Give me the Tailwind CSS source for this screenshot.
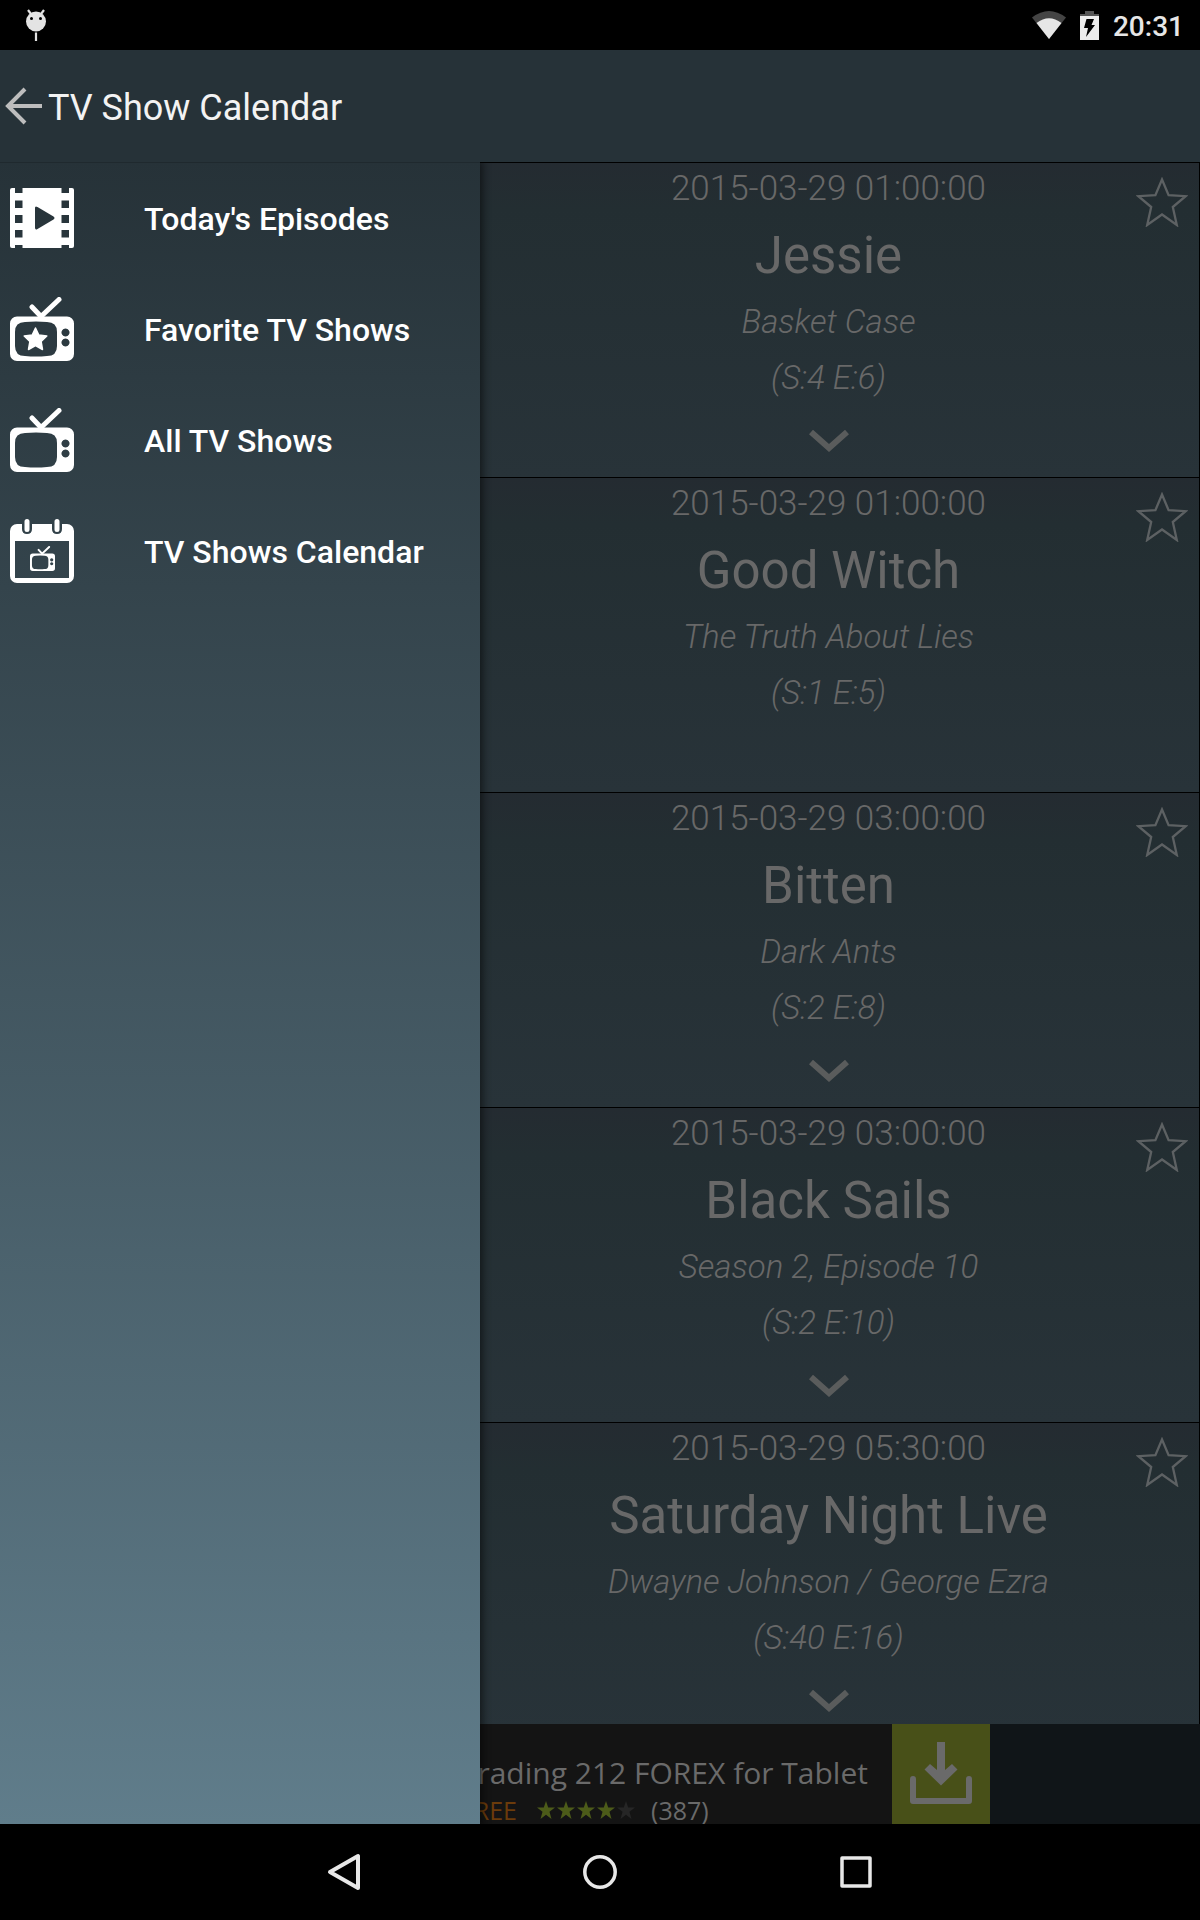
<!DOCTYPE html>
<html lang="en">
<head>
<meta charset="utf-8">
<meta name="viewport" content="width=device-width, initial-scale=1">
<title>TV Show Calendar</title>
<script src="https://cdn.jsdelivr.net/npm/@tailwindcss/browser@4"></script>
</head>
<body class="flex h-screen flex-col overflow-hidden bg-black font-['Roboto',sans-serif] text-white">

<!-- Symbols shared by the rows and the menu -->
<svg class="hidden" aria-hidden="true">
  <symbol id="star-outline" viewBox="0 0 52 50"><path d="M26 2.500l6.600 15.700 17 1-12.800 10.800 4 18L26 37.500 11.200 48l4-18L2.400 19.200l17-1z" fill="none" stroke="currentColor" stroke-width="2.300"/></symbol>
  <symbol id="chevron" viewBox="0 0 40 22"><path d="M2 2l18 16L38 2" fill="none" stroke="currentColor" stroke-width="6"/></symbol>
  <symbol id="star" viewBox="0 0 18 18"><path d="M9 0l2.200 6.500H18l-5.500 4.200L14.500 18 9 13.800 3.500 18l2-7.300L0 6.500h6.800z" fill="currentColor"/></symbol>
  <symbol id="tv" viewBox="0 0 64 64">
    <path d="M22 10l9 9.500L49 2.500" fill="none" stroke="currentColor" stroke-width="5" stroke-linecap="round"/>
    <path fill="currentColor" fill-rule="evenodd" d="M7 19.500h50a7 7 0 0 1 7 7V57a7 7 0 0 1-7 7H7a7 7 0 0 1-7-7V26.500a7 7 0 0 1 7-7zM15 25Q5 25 5 35v14q0 10 10 10 11 1 22 0 10 0 10-10V35q0-10-10-10-11-1-22 0zM55.500 31.500a4 4 0 1 0 .01 0zM55.500 41.500a4 4 0 1 0 .01 0z"/>
  </symbol>
</svg>

<header class="shrink-0">
  <div class="flex h-[50px] items-center bg-black pr-4 pl-[26px]">
    <svg class="h-8 w-5 text-[#e3e3e3]" viewBox="0 0 20 32" aria-hidden="true"><circle cx="10" cy="12.500" r="10" fill="currentColor"/><path d="M2 1l3 4M18 1l-3 4M10 23.500V32" stroke="currentColor" stroke-width="2.200"/><circle cx="5.500" cy="9.500" r="1.500" fill="#000"/><circle cx="14.500" cy="9.500" r="1.500" fill="#000"/></svg>
    <div class="ml-auto flex items-center gap-3.5">
      <svg class="h-7 w-[34px]" viewBox="0 0 34 28" aria-hidden="true"><path d="M0 6.500Q17-6.500 34 6.500L17 28z" fill="#444"/><path d="M4.500 12Q17 2.500 29.500 12L17 28z" fill="#e6e6e6"/></svg>
      <svg class="h-[29px] w-[19px]" viewBox="0 0 19 29" aria-hidden="true"><path d="M5 0h9v3h5v3H0V3h5z" fill="#555"/><path d="M0 5h19v24H0z" fill="#ededed"/><path d="M6.500 8H14l-2.500 6H15L6 26l2-9H4z" fill="#000"/></svg>
      <span class="pt-1 text-[28px] leading-8 font-medium text-[#e6e6e6]">20:31</span>
    </div>
  </div>
  <div class="flex h-28 items-center bg-[#263238] pl-[5px]">
    <button type="button" aria-label="Back" class="text-[#bdbdbd]"><svg class="h-[38px] w-[38px]" viewBox="0 0 38 38"><path d="M37 19H3M20 2L3 19l17 17" fill="none" stroke="currentColor" stroke-width="4"/></svg></button>
    <h1 class="pt-1 pl-[5px] text-[36px] leading-10 text-[#f3f3f3]">TV Show Calendar</h1>
  </div>
</header>

<div class="flex min-h-0 flex-1">
  <nav aria-label="Main menu" class="z-10 w-2/5 shrink-0 bg-linear-to-b from-[#263238] to-[#607d8b] shadow-[inset_0_1px_0_#1f292e,0_0_9px_2px_rgba(0,0,0,0.6)] [clip-path:inset(0_-12px_0_0)]">
    <ul class="text-[32px] leading-10 font-medium">
      <li><a href="#today" class="flex h-[111px] items-center gap-[70px] pl-2.5">
        <svg class="size-16 shrink-0" viewBox="0 0 64 64" aria-hidden="true"><path fill="currentColor" fill-rule="evenodd" d="M2 2h3v5h7.500V2h39v5H59V2h3q2 0 2 2v56q0 2-2 2h-3v-3h-7.500v3h-39v-3H5v3H2q-2 0-2-2V4q0-2 2-2zM5 14.500V22h7.500v-7.500zM5 29v8h7.500v-8zM5 44v7.500h7.500V44zM51.500 14.500V22H59v-7.500zM51.500 29v8H59v-8zM51.500 44v7.500H59V44zM25 22v19.500q0 3 2.500 1.500l16-9.500q2-1.500 0-3l-16-9.500Q25 19.500 25 22z"/></svg>
        <span class="pt-0.5">Today's Episodes</span></a></li>
      <li><a href="#favorites" class="flex h-[111px] items-center gap-[70px] pl-2.5">
        <svg class="size-16 shrink-0" viewBox="0 0 64 64" aria-hidden="true"><use href="#tv"/><path fill="currentColor" stroke="currentColor" stroke-width="1.500" stroke-linejoin="round" d="M25.500 31l3.300 7 8 1-5.700 5.500 1.400 8-7-4-7 4 1.400-8-5.700-5.500 8-1z"/></svg>
        <span class="pt-0.5">Favorite TV Shows</span></a></li>
      <li><a href="#all" class="flex h-[111px] items-center gap-[70px] pl-2.5">
        <svg class="size-16 shrink-0" aria-hidden="true"><use href="#tv"/></svg>
        <span class="pt-0.5">All TV Shows</span></a></li>
      <li><a href="#calendar" class="flex h-[111px] items-center gap-[70px] pl-2.5">
        <svg class="size-16 shrink-0" viewBox="0 0 64 64" aria-hidden="true"><path fill="currentColor" fill-rule="evenodd" d="M7 5h5v5q0 5 5 5t5-5V5h20v5q0 5 5 5t5-5V5h5a7 7 0 0 1 7 7v45a7 7 0 0 1-7 7H7a7 7 0 0 1-7-7V12a7 7 0 0 1 7-7zM5 22v37h54V22z"/><path d="M17 2.500v8M47 2.500v8" stroke="currentColor" stroke-width="5" stroke-linecap="round"/><use href="#tv" x="20" y="27" width="25" height="25"/></svg>
        <span class="pt-0.5">TV Shows Calendar</span></a></li>
    </ul>
  </nav>

  <div class="flex min-w-0 flex-1 flex-col">
    <main class="min-h-0 flex-1 overflow-hidden text-[#686868]" id="episodes"></main>

    <aside aria-label="Advertisement" class="flex h-[100px] shrink-0 overflow-hidden bg-[#101518]">
      <div class="flex w-[412px] shrink-0 flex-col items-end overflow-hidden bg-[#141414] pt-[29px] pr-6 font-['Open_Sans',sans-serif] whitespace-nowrap text-[#6a6a6a]">
        <div>
          <p class="text-[30px] leading-10">Trading 212 FOREX for Tablet</p>
          <div class="flex items-center text-[25px] leading-[34px]">
            <span class="text-[#6b3b0b]">FREE</span>
            <span class="flex gap-0.5 pl-5 text-[#4c5b19]" role="img" aria-label="4 out of 5 stars">
              <svg class="size-[18px]"><use href="#star"/></svg>
              <svg class="size-[18px]"><use href="#star"/></svg>
              <svg class="size-[18px]"><use href="#star"/></svg>
              <svg class="size-[18px]"><use href="#star"/></svg>
              <svg class="size-[18px] text-[#262626]"><use href="#star"/></svg>
            </span>
            <span class="pl-4">(387)</span>
          </div>
        </div>
      </div>
      <button type="button" aria-label="Install" class="flex w-[98px] shrink-0 justify-center bg-[#485018] pt-[18px] text-[#6a6a6a]">
        <svg class="h-[62px] w-[62px]" viewBox="0 0 62 62"><path d="M27 0h8v28l7-6 5.500 5.500L31 43.500 14.500 27.500 20 22l7 6z" fill="currentColor"/><path d="M3 37v22h56V37" fill="none" stroke="currentColor" stroke-width="6" stroke-linejoin="round" stroke-linecap="round"/></svg>
      </button>
    </aside>
  </div>
</div>

<nav aria-label="System" class="flex h-24 shrink-0 items-center justify-center bg-black text-[#e8e8e8]">
  <button type="button" aria-label="Back" class="flex w-64 justify-center"><svg class="h-10 w-10" viewBox="0 0 40 40"><path d="M34 4v32L6 20z" fill="none" stroke="currentColor" stroke-width="4" stroke-linejoin="round"/></svg></button>
  <button type="button" aria-label="Home" class="flex w-64 justify-center"><svg class="h-10 w-10" viewBox="0 0 40 40"><circle cx="20" cy="20" r="15.200" fill="none" stroke="currentColor" stroke-width="3.500"/></svg></button>
  <button type="button" aria-label="Recent apps" class="flex w-64 justify-center"><svg class="h-10 w-10" viewBox="0 0 40 40"><rect x="6" y="6" width="28" height="28" fill="none" stroke="currentColor" stroke-width="3.500" stroke-linejoin="round"/></svg></button>
</nav>

<script>
const episodes = [
  ["2015-03-29 01:00:00", "Jessie", "Basket Case", "(S:4 E:6)", true],
  ["2015-03-29 01:00:00", "Good Witch", "The Truth About Lies", "(S:1 E:5)", false],
  ["2015-03-29 03:00:00", "Bitten", "Dark Ants", "(S:2 E:8)", true],
  ["2015-03-29 03:00:00", "Black Sails", "Season 2, Episode 10", "(S:2 E:10)", true],
  ["2015-03-29 05:30:00", "Saturday Night Live", "Dwayne Johnson / George Ezra", "(S:40 E:16)", true],
];
document.getElementById("episodes").innerHTML = episodes.map(([date, show, title, number, more]) => `
  <article class="relative flex h-[315px] flex-col items-center border-t border-r border-black bg-linear-to-b from-[#242b31] via-[#232e32] via-15% to-[#283339] pr-[22px] text-center font-light">
    <time class="pt-1.5 text-[35px] leading-10">${date}</time>
    <h2 class="pt-[13px] text-[51px] leading-[68px] font-normal">${show}</h2>
    <p class="pt-3 text-[33px] leading-10 italic">${title}</p>
    <p class="pt-4 text-[33px] leading-10 italic">${number}</p>
    ${more ? `<button type="button" aria-label="More about ${show}" class="pt-8 text-[#5a5c5c]"><svg class="h-[22px] w-10"><use href="#chevron"/></svg></button>` : ""}
    <button type="button" aria-label="Add ${show} to favorites" class="absolute top-[14px] right-[11px] text-[#5d6163]"><svg class="h-[50px] w-[52px]"><use href="#star-outline"/></svg></button>
  </article>`).join("");
</script>
</body>
</html>
